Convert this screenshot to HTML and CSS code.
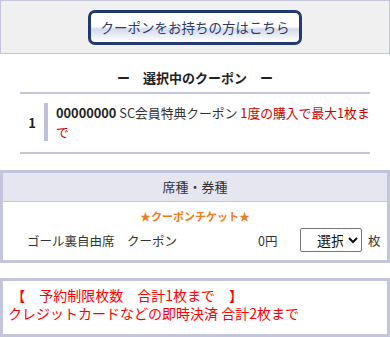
FILE: index.html
```html
<!DOCTYPE html>
<html lang="ja">
<head>
<meta charset="utf-8">
<title>クーポン</title>
<link rel="stylesheet" href="styles.css">
</head>
<body>
<div class="page">
  <div class="top">
    <a class="coupon-btn" href="#">クーポンをお持ちの方はこちら</a>
  </div>

  <h2 class="sec-title">ー　選択中のクーポン　ー</h2>

  <div class="coupon-list">
    <div class="coupon-row">
      <div class="num">1</div>
      <div class="desc"><b>00000000</b> SC会員特典クーポン <span class="limit">1度の購入で最大1枚まで</span></div>
    </div>
  </div>

  <div class="seat-box">
    <div class="seat-head">席種・券種</div>
    <div class="seat-body">
      <div class="ticket-label">★クーポンチケット★</div>
      <div class="seat-row">
        <span class="seat-name">ゴール裏自由席　クーポン</span>
        <span class="price">0円</span>
        <select class="qty"><option>選択</option><option>1</option></select>
        <span class="unit">枚</span>
      </div>
    </div>
  </div>

  <div class="notice">
    <div>&nbsp;【　予約制限枚数　合計1枚まで　】</div>
    <div>クレジットカードなどの即時決済 合計2枚まで</div>
  </div>
</div>
</body>
</html>
```

FILE: styles.css
```css
html, body {
  margin: 0;
  padding: 0;
  background: #fff;
}
body {
  font-family: "Noto Sans CJK JP", "Noto Sans", sans-serif;
  color: #333;
  width: 390px;
  height: 337px;
  overflow: hidden;
}
.page {
  display: flex;
  flex-direction: column;
}
.top {
  height: 52px;
  background: #f0f0f0;
  border: 1px solid #c4c4dc;
  display: flex;
  justify-content: center;
  align-items: center;
}
.coupon-btn {
  box-sizing: border-box;
  width: 214px;
  height: 35px;
  border: 3px solid #233a6e;
  border-radius: 7px;
  background: linear-gradient(#ffffff 0%, #ffffff 46%, #d3dbea 56%, #ffffff 100%);
  color: #2a3a6a;
  text-decoration: none;
  font-size: 13.5px;
  display: flex;
  align-items: center;
  justify-content: center;
}
.sec-title {
  margin: 0;
  padding: 14px 0 5px;
  line-height: 19px;
  font-size: 13px;
  font-weight: bold;
  color: #222;
  text-align: center;
}
.coupon-list {
  margin: 0 20px;
  border-top: 2px solid #c4c4dc;
  border-bottom: 2px solid #c4c4dc;
  padding: 9px 0 11px;
}
.coupon-row {
  display: flex;
  align-items: center;
}
.num {
  width: 24px;
  text-align: center;
  font-weight: bold;
  font-size: 13px;
  color: #222;
}
.desc {
  flex: 1;
  border-left: 4px solid #c0c0d8;
  padding-left: 8px;
  font-size: 12.8px;
  line-height: 19px;
  color: #333;
}
.desc b {
  color: #222;
}
.limit {
  color: #d00000;
}
.seat-box {
  margin-top: 16px;
  border: 3px solid #c4c4dc;
}
.seat-head {
  height: 28px;
  line-height: 28px;
  background: #e6e6f0;
  border-bottom: 1px solid #c4c4dc;
  text-align: center;
  font-size: 13px;
  color: #333;
}
.seat-body {
  padding: 6px 0 8px;
}
.ticket-label {
  text-align: center;
  color: #f07c20;
  font-size: 11px;
  font-weight: bold;
  line-height: 16px;
}
.seat-row {
  display: flex;
  align-items: center;
  margin-top: 4px;
  font-size: 12.5px;
  color: #333;
}
.seat-name {
  margin-left: 24px;
  width: 231px;
}
.price {
  width: 42px;
}
.qty {
  box-sizing: border-box;
  width: 62px;
  height: 24px;
  font-size: 14px;
  font-family: "Noto Sans CJK JP", sans-serif;
  border: 1px solid #767676;
  border-radius: 2px;
  background: #fff;
  color: #111;
  padding: 0 2px 0 12px;
}
.unit {
  margin-left: 6px;
}
.notice {
  margin-top: 15px;
  border: 3px solid #c4c4dc;
  height: 48px;
  padding: 5px 5px 0;
  color: #ff0000;
  font-size: 14px;
  line-height: 18px;
}
```
